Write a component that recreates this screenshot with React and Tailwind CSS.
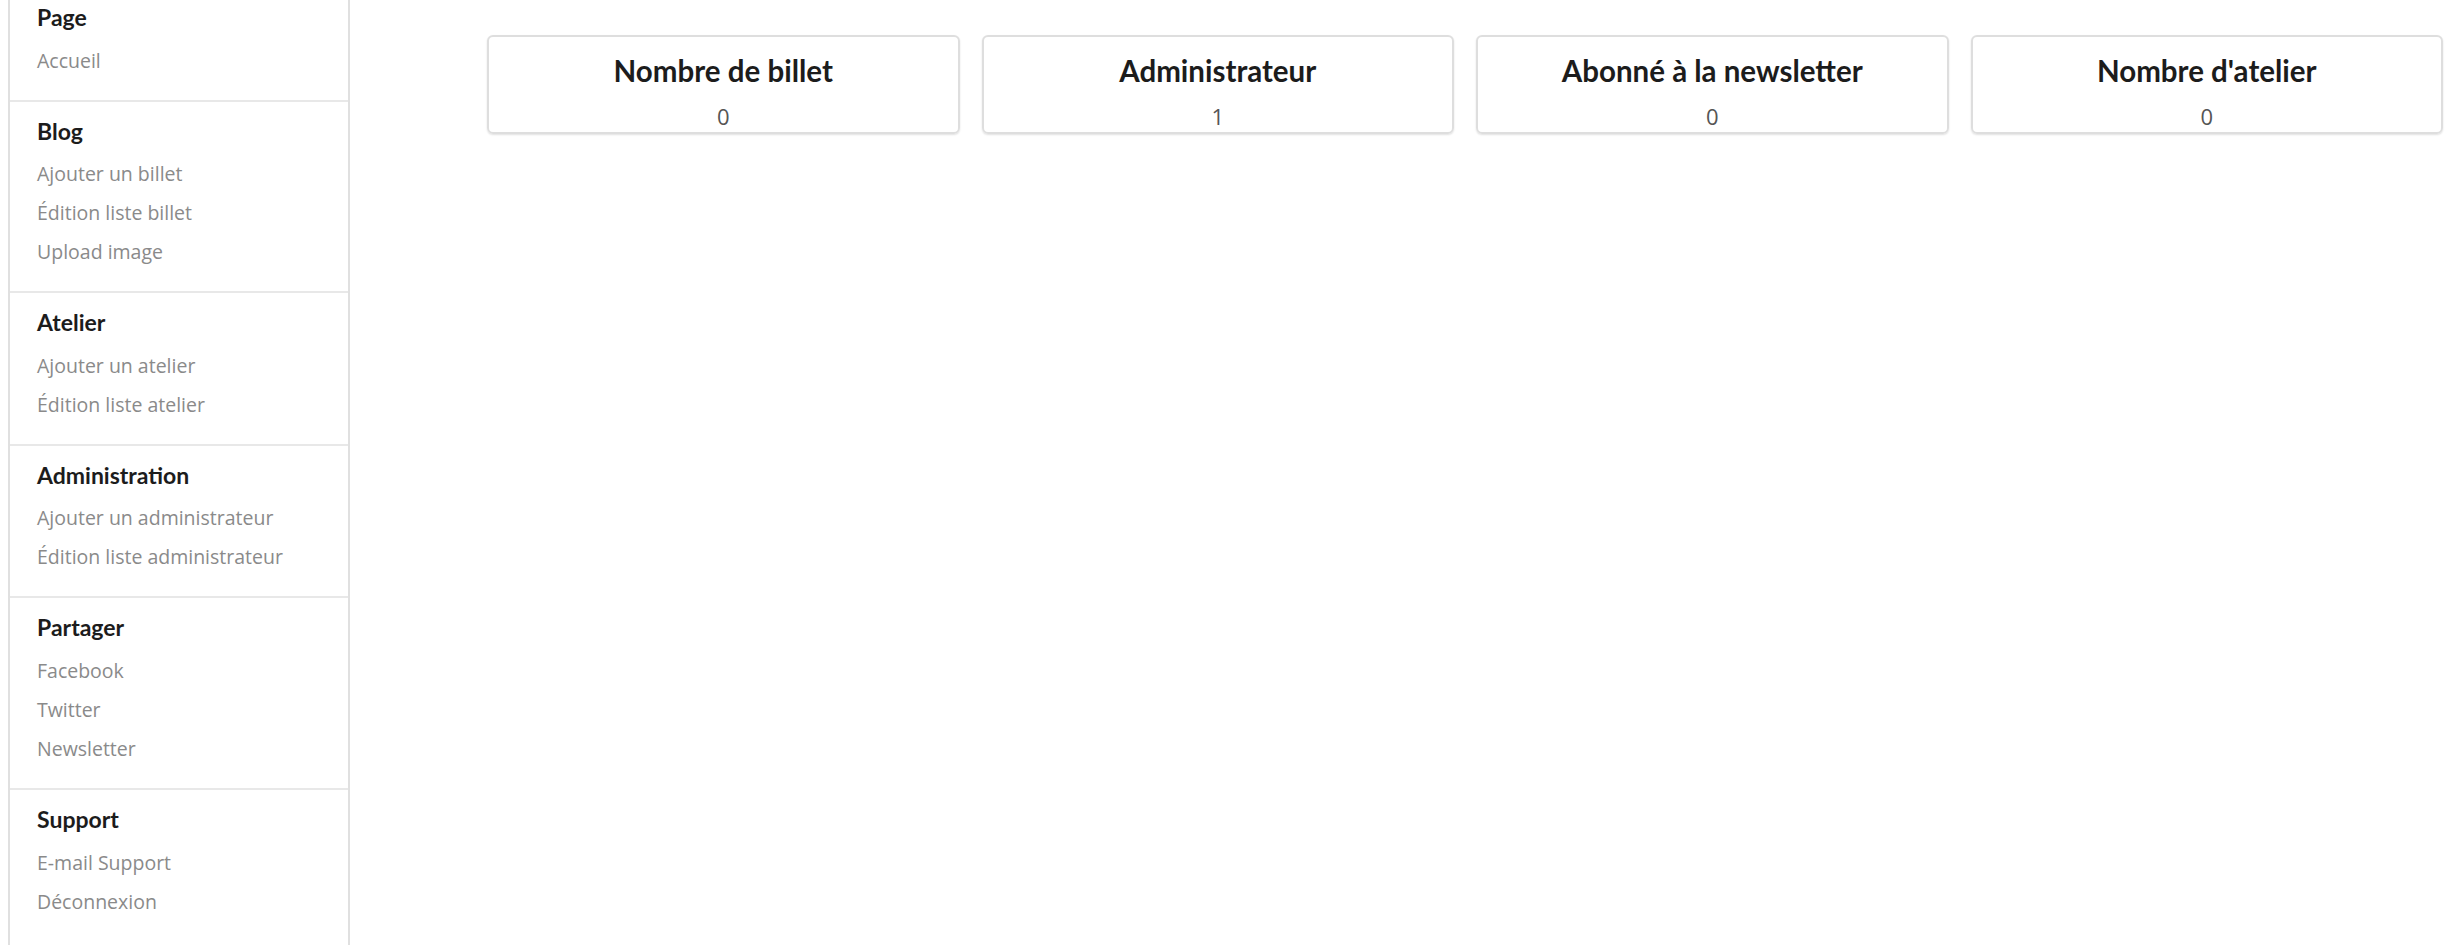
const sections = [
  { title: "Page", items: ["Accueil"] },
  { title: "Blog", items: ["Ajouter un billet", "Édition liste billet", "Upload image"] },
  { title: "Atelier", items: ["Ajouter un atelier", "Édition liste atelier"] },
  { title: "Administration", items: ["Ajouter un administrateur", "Édition liste administrateur"] },
  { title: "Partager", items: ["Facebook", "Twitter", "Newsletter"] },
  { title: "Support", items: ["E-mail Support", "Déconnexion"] },
];

const stats = [
  { label: "Nombre de billet", value: 0 },
  { label: "Administrateur", value: 1 },
  { label: "Abonné à la newsletter", value: 0 },
  { label: "Nombre d'atelier", value: 0 },
];

export default function App() {
  return (
    <div className="flex min-h-screen bg-white font-['Open_Sans',sans-serif]">
      {/* Sidebar */}
      <aside className="ml-[8px] w-[342px] shrink-0 border-x-[2px] border-[#e0e0e0] min-h-[945px]">
        {sections.map((s, i) => (
          <div
            key={s.title}
            className={`pl-[27px] pb-[20px] ${i === 0 ? "pt-[4px]" : "pt-[16px] border-t-[2px] border-[#e8e8e8]"}`}
          >
            <p className="font-['Lato',sans-serif] font-bold text-[23px] leading-[1.2] text-[#1c1c1c] mb-[9px]">
              {s.title}
            </p>
            {s.items.map(item => (
              <a key={item} href="#" className="block text-[19.5px] leading-[39px] text-[#8a8a8a]">
                {item}
              </a>
            ))}
          </div>
        ))}
      </aside>

      {/* Stats */}
      <main className="flex-1 pl-[137px] pr-[18px] pt-[35px]">
        <div className="grid grid-cols-4 gap-[22px]">
          {stats.map(st => (
            <div
              key={st.label}
              className="h-[99px] rounded-[6px] border-[2px] border-[#dedede] shadow-[0_1px_2px_rgba(0,0,0,0.12)] text-center pt-[16px]"
            >
              <p className="font-['Lato',sans-serif] font-bold text-[29.5px] leading-[1.2] text-[#1c1c1c]">{st.label}</p>
              <p className="text-[22px] leading-[1.3] text-[#555] mt-[14px]">{st.value}</p>
            </div>
          ))}
        </div>
      </main>
    </div>
  );
}
